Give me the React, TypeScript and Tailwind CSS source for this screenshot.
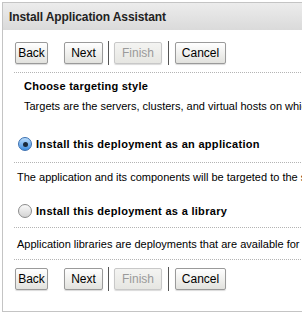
import React from 'react';

const font = { fontFamily: '"Liberation Sans", Arial, sans-serif' };

function Btn({ label, w, disabled }: { label: string; w: string; disabled?: boolean }) {
    return (
        <button
            disabled={disabled}
            className={`${w} h-[22px] rounded-[2px] border text-[12px] leading-none shadow-[0_1px_1px_rgba(0,0,0,0.15)] ${disabled ? 'border-[#c8c8c8] bg-gradient-to-b from-[#f4f4f2] to-[#e6e6e2] text-[#9a9a9a]' : 'border-[#9a9a9a] bg-gradient-to-b from-[#ffffff] to-[#e2e2de] text-black'}`}
        >
            {label}
        </button>
    );
}

function ButtonBar() {
    return (
        <div className="flex items-center pl-[12px]">
            <Btn label="Back" w="w-[33px]" />
            <div className="w-[16px]" />
            <Btn label="Next" w="w-[39px]" />
            <div className="mx-[5px] h-[24px] w-px bg-[#555]" />
            <Btn label="Finish" w="w-[48px]" disabled />
            <div className="mx-[6px] h-[24px] w-px bg-[#555]" />
            <Btn label="Cancel" w="w-[51px]" />
        </div>
    );
}

function Radio({ checked }: { checked?: boolean }) {
    return (
        <span
            className={`relative inline-flex h-[14px] w-[14px] shrink-0 items-center justify-center rounded-full border ${checked ? 'border-[#3a6fb0] bg-gradient-to-b from-[#b9dcfb] to-[#3d8fe0]' : 'border-[#8c8c8c] bg-gradient-to-b from-[#fafafa] to-[#d4d4d4]'}`}
        >
            {checked && <span className="h-[5px] w-[5px] rounded-full bg-[#1a2a3a]" />}
        </span>
    );
}

function Dotted() {
    return <div className="ml-[11px] border-t border-dotted border-[#b4b4b4]" />;
}

export default function App() {
    return (
        <div className="h-[314px] w-[302px] overflow-hidden bg-white pl-[2px] pt-[2px]" style={font}>
            <div className="h-[310px] w-[310px] overflow-hidden border border-[#c4c4c4]">
                <div className="flex h-[27px] items-center bg-gradient-to-b from-[#ececec] to-[#dadada] pl-[6px] text-[12px] font-bold tracking-[-0.1px] text-[#222]">
                    Install Application Assistant
                </div>
                <div className="pt-[11px]">
                    <ButtonBar />
                </div>
                <div className="mt-[7px]">
                    <Dotted />
                </div>
                <div className="pl-[21px] pt-[7px] text-[11px] font-bold leading-[13px] tracking-[0.25px] text-black">
                    Choose targeting style
                </div>
                <div className="whitespace-nowrap pl-[21px] pt-[7px] text-[11px] leading-[13px] text-black">
                    Targets are the servers, clusters, and virtual hosts on which this deployment will run.
                </div>
                <div className="flex items-center gap-[4px] pl-[15px] pt-[24px] text-[11px] font-bold leading-[13px] tracking-[0.3px] text-black">
                    <Radio checked />
                    <span>Install this deployment as an application</span>
                </div>
                <div className="mt-[11px]">
                    <Dotted />
                </div>
                <div className="whitespace-nowrap pl-[14px] pt-[8px] text-[11px] leading-[13px] text-black">
                    The application and its components will be targeted to the same locations.
                </div>
                <div className="flex items-center gap-[4px] pl-[15px] pt-[20px] text-[11px] font-bold leading-[13px] tracking-[0.3px] text-black">
                    <Radio />
                    <span>Install this deployment as a library</span>
                </div>
                <div className="mt-[9px]">
                    <Dotted />
                </div>
                <div className="whitespace-nowrap pl-[14px] pt-[10px] text-[11px] leading-[13px] text-black">
                    Application libraries are deployments that are available for other deployments to share.
                </div>
                <div className="mt-[8px]">
                    <Dotted />
                </div>
                <div className="pt-[7px]">
                    <ButtonBar />
                </div>
            </div>
        </div>
    );
}
